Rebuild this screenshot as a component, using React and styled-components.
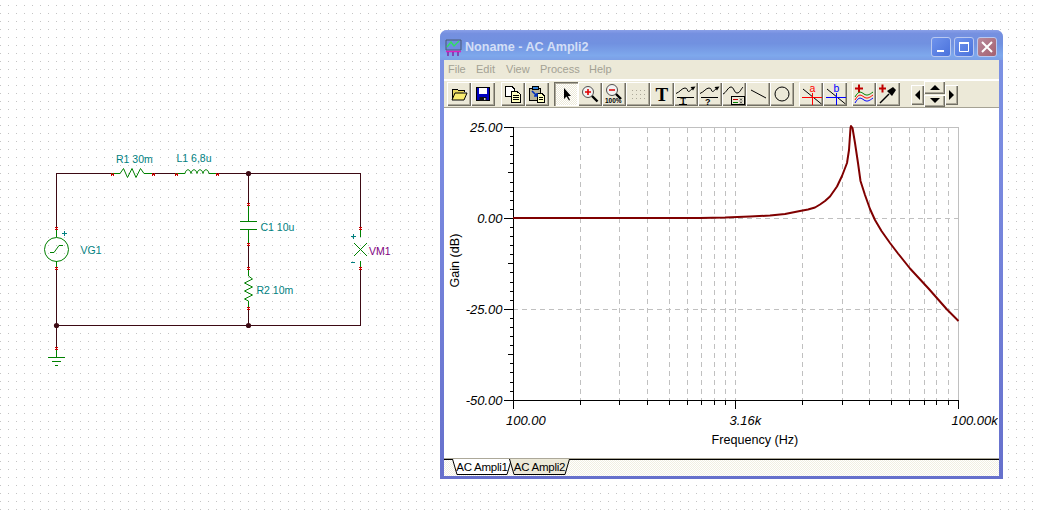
import React from 'react';
import styled, { createGlobalStyle } from 'styled-components';

const GlobalStyle = createGlobalStyle`
  html, body {
    margin: 0;
    padding: 0;
    background: #fff;
    overflow: hidden;
  }
`;

const Desktop = styled.div`
  position: relative;
  width: 1037px;
  height: 517px;
  overflow: hidden;
  font-family: 'Liberation Sans', Arial, sans-serif;
  background-color: #c4c4c4;
  background-image: linear-gradient(to right, transparent 1px, #fff 1px),
    linear-gradient(to bottom, transparent 1px, #fff 1px);
  background-size: 8px 8px;
  background-position: 0 5px;
`;

const Schematic = styled.svg`
  position: absolute;
  left: 0;
  top: 0;
  width: 1037px;
  height: 517px;
`;

const Window = styled.div`
  position: absolute;
  left: 440px;
  top: 30px;
  width: 563px;
  height: 449px;
  display: flex;
  flex-direction: column;
  border-radius: 7px 7px 0 0;
  overflow: hidden;
  background: linear-gradient(180deg, #7c93e4 0%, #7a8ae0 30%, #6670cc 100%);
`;

const TitleBar = styled.div`
  display: flex;
  align-items: center;
  flex-shrink: 0;
  height: 30px;
  padding: 5px 6px 1px 5px;
  box-sizing: border-box;
  background: linear-gradient(
    180deg,
    #8aa0e8 0%,
    #7590e0 12%,
    #7191e0 45%,
    #7ea8ec 85%,
    #7c9fe6 100%
  );
`;

const TitleText = styled.div`
  flex-grow: 1;
  margin-left: 3px;
  font-size: 12.6px;
  font-weight: bold;
  color: #d3def6;
  white-space: nowrap;
`;

const CaptionButtons = styled.div`
  display: flex;
  gap: 3px;
`;

const CaptionButton = styled.div`
  display: flex;
  align-items: center;
  justify-content: center;
  width: 20px;
  height: 20px;
  box-sizing: border-box;
  border: 1px solid #b9c8f0;
  border-radius: 3px;
  background: ${props =>
    props.$close
      ? 'linear-gradient(135deg, #b98a9c, #a4606f)'
      : 'linear-gradient(135deg, #6f93ec, #4a72dc)'};
`;

const Body = styled.div`
  display: flex;
  flex-direction: column;
  flex-grow: 1;
  margin: 0 4px 3px;
  background: #ece9d8;
`;

const MenuBar = styled.div`
  display: flex;
  align-items: center;
  flex-shrink: 0;
  height: 19px;
  box-sizing: border-box;
  padding: 0 0 2px 4px;
  background: #ece9d8;
`;

const MenuItem = styled.div`
  width: ${props => props.$w}px;
  font-size: 11px;
  color: #a3a194;
`;

const Toolbar = styled.div`
  display: flex;
  align-items: flex-start;
  flex-shrink: 0;
  height: 29px;
  box-sizing: border-box;
  padding: 1px 0 0 3px;
  border-top: 2px solid #fff;
  border-bottom: 1px solid #a5a294;
  background: #ece9d8;
`;

const Group = styled.div`
  display: flex;
  margin-right: ${props => props.$gap}px;
`;

const Button = styled.div`
  display: flex;
  align-items: center;
  justify-content: center;
  flex-shrink: 0;
  width: 24px;
  height: 24px;
  box-sizing: border-box;
  background: #ece9d8;
  box-shadow: inset 1px 1px 0 #fff, inset -1px -1px 0 #716f64,
    inset -2px -2px 0 #aca899;
`;

const PressedButton = styled(Button)`
  background-color: #fbfaf6;
  background-image: conic-gradient(#ece9d8 25%, #fff 0 50%, #ece9d8 0 75%, #fff 0);
  background-size: 2px 2px;
  box-shadow: inset 1px 1px 0 #716f64, inset 2px 2px 0 #aca899,
    inset -1px -1px 0 #fff;
`;

const NudgeButton = styled(Button)`
  width: 13px;
  height: 20px;
  margin-top: 3px;
`;

const Spinner = styled.div`
  display: flex;
  flex-direction: column;
  gap: 1px;
  margin-top: -1px;
`;

const SpinButton = styled(Button)`
  width: 21px;
  height: 12.5px;
`;

const Client = styled.div`
  flex-shrink: 0;
  height: 350px;
  background: #fff;
`;

const Plot = styled.svg`
  display: block;
  width: 554px;
  height: 350px;
`;

const TabStrip = styled.div`
  display: flex;
  flex-grow: 1;
  box-sizing: border-box;
  padding-left: 8px;
  border-top: 1px solid #aca899;
  background-color: #fff;
  background-image: conic-gradient(#f1efe2 25%, #fff 0 50%, #f1efe2 0 75%, #fff 0);
  background-size: 2px 2px;
  box-shadow: inset 0 1px 0 #000;
`;

const Tab = styled.div`
  position: relative;
  width: ${props => props.$w}px;
  height: 16px;
  margin-left: ${props => props.$overlap || 0}px;
  font-size: 11.5px;
  letter-spacing: -0.25px;
  line-height: 17px;
  text-align: center;
  color: #000;
`;

const TabShape = styled.svg`
  position: absolute;
  left: 0;
  top: 0;
  width: 100%;
  height: 100%;
`;

const TabLabel = styled.span`
  position: relative;
`;

const TICK_X = [
  580.5, 619.5, 647.5, 669.5, 687.5, 701.5, 714.5, 725.5, 735.5, 802.5, 842.5,
  869.5, 891.5, 909.5, 924.5, 936.5, 948.5,
];
const GAIN_CURVE = [
  [513, 218], [700, 218], [725, 217.6], [750, 216.6], [770, 215.5], [785, 214],
  [800, 211], [808, 209.5], [815, 207.5], [820, 204.5], [825, 201], [830, 196.5],
  [837, 186.5], [842, 176], [847, 163], [849, 150], [850.5, 128], [851, 126],
  [852.5, 128], [855, 143], [858, 163], [860.5, 181], [865, 195], [870, 209],
  [875, 220], [881.5, 231], [890, 243], [898, 253.5], [910, 268.5],
  [928.5, 288.5], [947, 309.5], [958.5, 321],
];

// y axis minor ticks, every 2.5 dB
const yTicks = Array.from({ length: 31 }, (_, i) => 127.5 + i * 9.09);

const PINS_H = [[112, 173], [153, 173], [176, 173], [217, 173]];
const PINS_V = [
  [56, 229], [56, 269], [56, 349], [248, 205], [248, 245], [248, 269], [248, 309],
  [360, 229], [360, 269],
];

function Circuit() {
  const wire = { stroke: '#3d0a14', fill: 'none' };
  const part = { stroke: '#008000', fill: 'none' };
  const label = { fontSize: 10.5, fill: '#008080', fontFamily: 'Liberation Sans, sans-serif' };

  return (
    <Schematic viewBox="0 0 1037 517">
      <g {...wire} shapeRendering="crispEdges">
        <path d="M56.5 229V173.5H112" />
        <path d="M153 173.5H176" />
        <path d="M217 173.5H360.5V229" />
        <path d="M248.5 173V205" />
        <path d="M248.5 245V269" />
        <path d="M248.5 309V325" />
        <path d="M360.5 269V325.5H56.5V269" />
        <path d="M56.5 325V349" />
      </g>
      <circle cx="248.5" cy="173.5" r="2.6" fill="#3d0a14" />
      <circle cx="248.5" cy="325.5" r="2.6" fill="#3d0a14" />
      <circle cx="56.5" cy="325.5" r="2.6" fill="#3d0a14" />

      <g {...part}>
        <path d="M112 173.5H120L123.5 168.5L127.5 177.5L132 168.5L136 177.5L140.5 168.5L144 173.5H153" />
        <path d="M176 173.5H185c1-5 5-5 6 0c1-5 5-5 6 0c1-5 5-5 6 0c1-5 5-5 6 0H217" />
        <path d="M248.5 205V221M248.5 229V245" />
        <path d="M240 221.5H257M240 229.5H257" shapeRendering="crispEdges" />
        <path d="M248.5 269V276L252.5 279L244.5 283L252.5 287L244.5 291L252.5 295L244.5 299L248.5 301V309" />
        <path d="M56.5 229V237M56.5 261V269" />
        <circle cx="56.5" cy="249.5" r="12" />
        <path d="M50 252.5H54L59 245.5H63" />
        <path d="M56.5 349V357" />
        <path d="M48 357.5H65M52 361.5H61M55 365.5H58" shapeRendering="crispEdges" />
        <path d="M360.5 229V237M360.5 261V269" />
        <path d="M354 243L367 256M367 243L354 256" />
      </g>

      <g stroke="#c80000" fill="none" shapeRendering="crispEdges">
        {PINS_H.map(([x, y]) => (
          <path key={`${x}-${y}`} d={`M${x - 1} ${y}v3M${x + 1} ${y}v3M${x - 1} ${y + 1.5}h3`} />
        ))}
        {PINS_V.map(([x, y]) => (
          <path key={`${x}-${y}`} d={`M${x - 1} ${y - 1.5}h3M${x - 1} ${y + 0.5}h3M${x + 0.5} ${y - 2}v3`} />
        ))}
      </g>

      <path d="M61.5 233.5h5M64 231v5M350.5 236.5h5M353 234v5M351 262.5h4" stroke="#008080" fill="none" shapeRendering="crispEdges" />

      <text x="116" y="163" {...label}>R1 30m</text>
      <text x="176.5" y="162" {...label}>L1 6,8u</text>
      <text x="80.5" y="253.5" {...label}>VG1</text>
      <text x="260.5" y="231" {...label}>C1 10u</text>
      <text x="256.5" y="294" {...label}>R2 10m</text>
      <text x="369" y="255" {...label} fill="#800080">VM1</text>
    </Schematic>
  );
}

function Chart() {
  const line = GAIN_CURVE.map(p => p.join(',')).join(' ');
  const tick = { fontSize: 13, fontStyle: 'italic', fill: '#000', fontFamily: 'Liberation Sans, sans-serif' };
  const title = { fontSize: 12.6, fill: '#000', fontFamily: 'Liberation Sans, sans-serif' };

  return (
    <Plot viewBox="444 108 554 350">
      <g stroke="#c0c0c0" fill="none" shapeRendering="crispEdges">
        <path d="M513 127.5H958.5V400" />
        <path d="M513 218.5H958M513 309.5H958" strokeDasharray="5 4" />
        {TICK_X.map(x => (
          <path key={x} d={`M${x} 128V400`} strokeDasharray="5 4" />
        ))}
      </g>
      <g stroke="#000" fill="none" shapeRendering="crispEdges">
        <path d="M513.5 127V400.5H958.5" />
        {yTicks.map((y, i) => (
          <path key={y} d={`M${i % 10 === 0 ? 504 : i % 5 === 0 ? 508 : 509.5} ${y}H513`} />
        ))}
        {TICK_X.map(x => (
          <path key={x} d={`M${x} 400V${x === 735.5 ? 409 : 404.5}`} />
        ))}
        <path d="M513.5 400V409M958.5 400V409" />
      </g>
      <polyline points={line} fill="none" stroke="#800000" strokeWidth="2" strokeLinejoin="round" />

      <text x="502.5" y="132" textAnchor="end" {...tick}>25.00</text>
      <text x="502.5" y="223" textAnchor="end" {...tick}>0.00</text>
      <text x="502.5" y="314" textAnchor="end" {...tick}>-25.00</text>
      <text x="502.5" y="405" textAnchor="end" {...tick}>-50.00</text>
      <text x="506" y="425" {...tick}>100.00</text>
      <text x="729.5" y="425" {...tick}>3.16k</text>
      <text x="951.5" y="425" {...tick}>100.00k</text>
      <text x="711.5" y="444" {...title}>Frequency (Hz)</text>
      <text x="458.5" y="287.5" transform="rotate(-90 458.5 287.5)" {...title}>Gain (dB)</text>
    </Plot>
  );
}

const Icon = ({ w = 18, h = 18, vb = '0 0 18 18', children }) => (
  <svg width={w} height={h} viewBox={vb} fill="none" stroke="#000" overflow="visible">
    {children}
  </svg>
);

const ChartCurve = () => (
  <>
    <path d="M0 9.5C4 8 6 4 9 4S11 7.5 12.5 7.5S15 5.5 17 4" />
    <path d="M19.5 2.5L14.5 3L17 6.5Z" fill="#000" stroke="none" />
    <path d="M0.5 13H17.5" shapeRendering="crispEdges" />
  </>
);

function MiniText({ x, y, size = 7, fill = '#000', weight = 'bold', font = 'Liberation Sans, sans-serif', children }) {
  return (
    <text x={x} y={y} fontSize={size} fontWeight={weight} fontFamily={font} fill={fill} stroke="none">
      {children}
    </text>
  );
}

const TOOL_ICONS = {
  open: (
    <Icon>
      <path d="M2 14V5l1-1h4l1 1h6v2" fill="#e8d860" shapeRendering="crispEdges" />
      <path d="M2 15L5 8H17L14 15Z" fill="#f8ec70" />
    </Icon>
  ),
  save: (
    <Icon>
      <path d="M2.5 2.5H15.5V15.5H2.5Z" fill="#0000c0" shapeRendering="crispEdges" />
      <path d="M5 3H13V9H5Z" fill="#fff" stroke="none" />
      <path d="M5.5 12H12.5V16H5.5Z" fill="#111" stroke="none" />
      <path d="M10 13h1.5v2H10z" fill="#ccc" stroke="none" />
    </Icon>
  ),
  copy: (
    <Icon>
      <path d="M1.5 1.5H8L10.5 4V11H1.5Z" fill="#fff" shapeRendering="crispEdges" />
      <path d="M7.5 6.5H13L16.5 9.5V17H7.5Z" fill="#ffffc0" shapeRendering="crispEdges" />
      <path d="M9 10.5H15M9 12.5H15M9 14.5H15" shapeRendering="crispEdges" />
    </Icon>
  ),
  paste: (
    <Icon>
      <path d="M1.5 3.5H12.5V15.5H1.5Z" fill="#b8b49a" shapeRendering="crispEdges" />
      <path d="M4 1.5H10V4.5H4Z" fill="#2f7fd8" stroke="#000" shapeRendering="crispEdges" />
      <path d="M9.5 8.5H14L16.5 11V17.5H9.5Z" fill="#ffffc0" shapeRendering="crispEdges" />
      <path d="M11 12.5H15M11 14.5H15" shapeRendering="crispEdges" />
      <path d="M4 6L9 11M9 8V11H6" stroke="#0030c0" strokeWidth="1.6" />
    </Icon>
  ),
  arrow: (
    <Icon>
      <path d="M7 3V14L9.5 11.5L12 15.5L13 15L11 11H14Z" fill="#000" stroke="none" />
    </Icon>
  ),
  zoomIn: (
    <Icon>
      <circle cx="7" cy="7" r="5.5" fill="#f2f2f2" stroke="#505050" />
      <path d="M4 7H10M7 4V10" stroke="#e00000" strokeWidth="1.6" />
      <path d="M11 11L16.5 16.5" strokeWidth="2.4" />
    </Icon>
  ),
  zoomOut: (
    <Icon w={20} h={20} vb="0 0 20 20">
      <circle cx="8" cy="6" r="5.5" fill="#f2f2f2" stroke="#505050" />
      <path d="M5 6H11" stroke="#e00000" strokeWidth="1.6" />
      <path d="M12 10L17 15" strokeWidth="2.4" />
      <MiniText x={1} y={19} size={6.5}>100%</MiniText>
    </Icon>
  ),
  grid: (
    <Icon>
      <path
        d="M3 5h1M7 5h1M11 5h1M15 5h1M3 9h1M7 9h1M11 9h1M15 9h1M3 13h1M7 13h1M11 13h1M15 13h1"
        stroke="#aca899"
        shapeRendering="crispEdges"
      />
    </Icon>
  ),
  text: (
    <Icon>
      <MiniText x={2.5} y={15.5} size={19} font="Liberation Serif, serif">T</MiniText>
    </Icon>
  ),
  curveText: (
    <Icon w={20} h={20} vb="0 0 20 20">
      <ChartCurve />
      <MiniText x={4.5} y={20} size={8} font="Liberation Serif, serif">T</MiniText>
      <path d="M3 20.5H11" shapeRendering="crispEdges" />
    </Icon>
  ),
  curveHelp: (
    <Icon w={20} h={20} vb="0 0 20 20">
      <ChartCurve />
      <MiniText x={5} y={20.5} size={9}>?</MiniText>
    </Icon>
  ),
  curveBox: (
    <Icon w={20} h={20} vb="0 0 20 20">
      <path d="M-1 10C2 9 4 3 7 3S10 9 13 9S17 5 19 3" />
      <path d="M7.5 12.5H20.5V20.5H7.5Z" fill="#ece9d8" shapeRendering="crispEdges" />
      <path d="M9 15H14" stroke="#c00000" shapeRendering="crispEdges" />
      <path d="M9 18H14" stroke="#008000" shapeRendering="crispEdges" />
      <path d="M16 14.5l2 2M18 14.5l-2 2M16 17.5l2 2M18 17.5l-2 2" strokeWidth="0.7" />
    </Icon>
  ),
  line: (
    <Icon>
      <path d="M2 5L17 13" />
    </Icon>
  ),
  circle: (
    <Icon>
      <circle cx="9" cy="9" r="7" />
    </Icon>
  ),
  cursorA: (
    <Icon w={20} h={20} vb="0 0 20 20">
      <path d="M2 5L20.5 20" />
      <path d="M1 13.5H20.5M11.5 9V20.5" stroke="#ff0000" shapeRendering="crispEdges" />
      <MiniText x={8.5} y={7.5} size={10.5} fill="#ff0000" weight="normal">a</MiniText>
    </Icon>
  ),
  cursorB: (
    <Icon w={20} h={20} vb="0 0 20 20">
      <path d="M2 5L20.5 20" />
      <path d="M1 13.5H20.5M11.5 9V20.5" stroke="#0000ff" shapeRendering="crispEdges" />
      <MiniText x={8.5} y={7.5} size={10.5} fill="#0000ff" weight="normal">b</MiniText>
    </Icon>
  ),
  waves: (
    <Icon w={20} h={20} vb="0 0 20 20">
      <path d="M1 4.5H9M5 0.5V8.5" stroke="#c00000" strokeWidth="2" />
      <path d="M1 13c4-7 6-5 9-3s5 1 9-2" stroke="#008000" />
      <path d="M1 16c4-7 6-5 9-3s5 1 9-2" stroke="#ff0000" />
      <path d="M1 19c4-7 6-5 9-3s5 1 9-2" stroke="#0000ff" />
    </Icon>
  ),
  dropper: (
    <Icon w={20} h={20} vb="0 0 20 20">
      <path d="M1 4.5H8M4.5 0.5V8.5" stroke="#c00000" strokeWidth="2" />
      <path d="M2 19L11 10" strokeWidth="1.5" />
      <path d="M9 7L14 12L18 6L15 3Z" fill="#000" stroke="none" />
    </Icon>
  ),
};

const Triangle = ({ dir }) => {
  const points = {
    up: '0,6 10,6 5,1',
    down: '0,1 10,1 5,6',
    left: '6,0 6,10 1,5',
    right: '1,0 1,10 6,5',
  }[dir];
  const vertical = dir === 'up' || dir === 'down';
  return (
    <svg width={vertical ? 10 : 7} height={vertical ? 7 : 10} viewBox={vertical ? '0 0 10 7' : '0 0 7 10'}>
      <polygon points={points} fill="#000" />
    </svg>
  );
};

const TabOutline = ({ w, d, fill }) => (
  <TabShape viewBox={`0 0 ${w} 16`} preserveAspectRatio="none">
    <path d={`M0.5 0L${d} 15.5H${w - d}L${w - 0.5} 0`} fill={fill} stroke="#000" />
  </TabShape>
);

const TOOL_GROUPS = [
  { gap: 6, items: ['open', 'save'] },
  { gap: 5, items: ['copy', 'paste'] },
  {
    gap: 5,
    items: [
      'arrow', 'zoomIn', 'zoomOut', 'grid', 'text', 'curveText', 'curveHelp', 'curveBox',
      'line', 'circle',
    ],
  },
  { gap: 5, items: ['cursorA', 'cursorB'] },
  { gap: 11, items: ['waves', 'dropper'] },
];

const MENU = [['File', 28], ['Edit', 30], ['View', 34], ['Process', 49], ['Help', 30]];

export default function App() {
  return (
    <Desktop>
      <GlobalStyle />
      <Circuit />
      <Window>
        <TitleBar>
          <svg width="17" height="17" viewBox="0 0 17 17" fill="none">
            <path d="M1 1H16V11H1Z" fill="#6f8be0" stroke="#4a5a70" />
            <path d="M2 8L6 3L9 7L14 2" stroke="#30e060" strokeWidth="1.4" />
            <path d="M1 12.5H16" stroke="#e020c0" strokeWidth="1.5" />
            <path d="M3 13V17M8 13V17M13 13V17" stroke="#8020a0" strokeWidth="1.4" />
          </svg>
          <TitleText>Noname - AC Ampli2</TitleText>
          <CaptionButtons>
            <CaptionButton>
              <svg width="14" height="14" viewBox="0 0 14 14">
                <path d="M3 10H10V12H3Z" fill="#fff" />
              </svg>
            </CaptionButton>
            <CaptionButton>
              <svg width="14" height="14" viewBox="0 0 14 14" fill="none">
                <path d="M2.5 3.5H11.5V11.5H2.5Z" stroke="#fff" />
                <path d="M2 3H12" stroke="#fff" strokeWidth="2" />
              </svg>
            </CaptionButton>
            <CaptionButton $close>
              <svg width="14" height="14" viewBox="0 0 14 14" fill="none">
                <path d="M2 2L12 12M12 2L2 12" stroke="#fff" strokeWidth="2" />
              </svg>
            </CaptionButton>
          </CaptionButtons>
        </TitleBar>
        <Body>
          <MenuBar>
            {MENU.map(([name, w]) => (
              <MenuItem key={name} $w={w}>{name}</MenuItem>
            ))}
          </MenuBar>
          <Toolbar>
            {TOOL_GROUPS.map(group => (
              <Group key={group.items[0]} $gap={group.gap}>
                {group.items.map(name =>
                  name === 'arrow' ? (
                    <PressedButton key={name}>{TOOL_ICONS[name]}</PressedButton>
                  ) : (
                    <Button key={name}>{TOOL_ICONS[name]}</Button>
                  ),
                )}
              </Group>
            ))}
            <Group $gap={0}>
              <NudgeButton><Triangle dir="left" /></NudgeButton>
              <Spinner>
                <SpinButton><Triangle dir="up" /></SpinButton>
                <SpinButton><Triangle dir="down" /></SpinButton>
              </Spinner>
              <NudgeButton><Triangle dir="right" /></NudgeButton>
            </Group>
          </Toolbar>
          <Client>
            <Chart />
          </Client>
          <TabStrip>
            <Tab $w={60}>
              <TabOutline w={60} d={5} fill="#fff" />
              <TabLabel>AC Ampli1</TabLabel>
            </Tab>
            <Tab $w={61} $overlap={-3}>
              <TabOutline w={61} d={5} fill="#ece9d8" />
              <TabLabel>AC Ampli2</TabLabel>
            </Tab>
          </TabStrip>
        </Body>
      </Window>
    </Desktop>
  );
}
